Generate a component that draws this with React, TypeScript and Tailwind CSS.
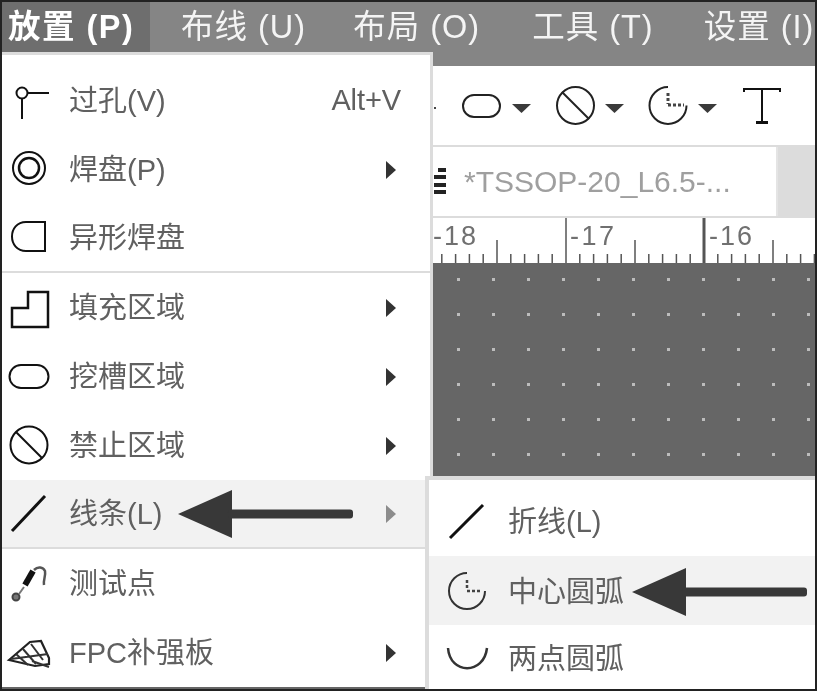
import React from "react";

const FONT = { fontFamily: '"Liberation Sans","Noto Sans CJK SC",sans-serif' };

function Caret({ light }: { light?: boolean }) {
  return (
    <svg width="10" height="18" viewBox="0 0 10 18" className="shrink-0">
      <path d="M0 0 L10 9 L0 18 Z" fill={light ? "#8c8c8c" : "#333"} />
    </svg>
  );
}

function DropCaret() {
  return (
    <svg width="19" height="9" viewBox="0 0 19 9" className="mt-[6px] shrink-0">
      <path d="M0 0 H19 L9.5 9 Z" fill="#3a3a3a" />
    </svg>
  );
}

function RowIcon({ w = 67, h = 69, children }: { w?: number; h?: number; children: React.ReactNode }) {
  return (
    <svg width={w} height={h} viewBox={`0 0 ${w} ${h}`} fill="none" stroke="#111" strokeWidth="2" className="shrink-0">
      {children}
    </svg>
  );
}

function MenuRow({
  icon,
  label,
  shortcut,
  arrow,
  active,
  separator,
}: {
  icon: React.ReactNode;
  label: string;
  shortcut?: string;
  arrow?: boolean;
  active?: boolean;
  separator?: boolean;
}) {
  return (
    <div
      className={`flex h-[69px] items-center pr-[34px] ${active ? "bg-[#f2f2f2]" : ""} ${
        separator ? "border-b-2 border-[#dcdcdc]" : ""
      }`}
    >
      <RowIcon>{icon}</RowIcon>
      <span className="mt-[3px] flex-1 whitespace-nowrap text-[29px] text-[#606060]">{label}</span>
      {shortcut && <span className="mr-[-5px] text-[29px] tracking-[-0.1px] text-[#606060]">{shortcut}</span>}
      {arrow && <Caret light={active} />}
    </div>
  );
}

function SubRow({
  icon,
  label,
  active,
  h,
  textClass,
}: {
  icon: React.ReactNode;
  label: string;
  active?: boolean;
  h: number;
  textClass: string;
}) {
  return (
    <div className={`flex items-center ${active ? "bg-[#f2f2f2]" : ""}`} style={{ height: h }}>
      <RowIcon w={79} h={h}>{icon}</RowIcon>
      <span className={`whitespace-nowrap text-[29px] text-[#606060] ${textClass}`}>{label}</span>
    </div>
  );
}

function Arrow({ className }: { className: string }) {
  return (
    <svg width="176" height="48" viewBox="0 0 176 48" className={`absolute ${className}`}>
      <path d="M0 24 L54 0 V48 Z" fill="#383838" />
      <rect x="50" y="19.5" width="125" height="9" rx="3" fill="#383838" />
    </svg>
  );
}

function Ruler() {
  const ticks: React.ReactNode[] = [];
  for (let i = 0; i < 28; i++) {
    const x = 13.8 * i + 7.8;
    const m = i % 10;
    const major = m === 9;
    const mid = m === 4;
    ticks.push(
      <line
        key={i}
        x1={x}
        x2={x}
        y1={major ? 0 : mid ? 22 : 36}
        y2={45}
        stroke="#555"
        strokeWidth={major ? (i > 15 ? 3 : 1.5) : 1.5}
      />
    );
  }
  return (
    <svg width="385" height="45" viewBox="0 0 385 45" className="absolute left-[432px] top-0">
      {ticks}
    </svg>
  );
}

const menuItems = ["布线 (U)", "布局 (O)", "工具 (T)", "设置 (I)"];
const menuX = ["ml-[31px]", "ml-[47px]", "ml-[52px]", "ml-[50px]"];

export default function App() {
  return (
    <div className="h-[693px] w-[819px] overflow-hidden bg-white blur-[0.5px]" style={FONT}>
      <div className="relative flex h-[691px] w-[817px] flex-col overflow-hidden border-2 border-[#222]">
        {/* menu bar */}
        <div className="flex h-[64px] shrink-0 items-start bg-[#858585] text-[32.5px] leading-[50px] tracking-[1px] text-[#f4f4f4]">
          <div className="flex h-[50px] w-[148px] items-center bg-[#6e6e6e] pl-[6px] font-bold tracking-[1.5px] text-white">放置 (P)</div>
          {menuItems.map((t, i) => (
            <span key={t} className={`${menuX[i]} whitespace-nowrap`}>
              {t}
            </span>
          ))}
        </div>

        {/* toolbar */}
        <div className="flex h-[79px] shrink-0 items-center bg-white pl-[432px]">
          <div className="mr-[26px] mt-[4px] h-[2px] w-[2px] shrink-0 bg-[#444]" />
          <svg width="40" height="26" viewBox="0 0 40 26" fill="none" stroke="#222" strokeWidth="2" className="mr-[10px] shrink-0">
            <rect x="1" y="2" width="37" height="22" rx="11" />
          </svg>
          <DropCaret />
          <svg width="41" height="41" viewBox="0 0 41 41" fill="none" stroke="#222" strokeWidth="2" className="ml-[24px] mr-[9px] shrink-0">
            <circle cx="20.5" cy="20.5" r="18.5" />
            <path d="M7 7 L34 34" />
          </svg>
          <DropCaret />
          <svg width="41" height="41" viewBox="0 0 41 41" fill="none" stroke="#222" strokeWidth="2" className="ml-[24px] mr-[9px] shrink-0">
            <path d="M20 2 A18.5 18.5 0 1 0 38.5 20.5" />
            <path d="M20 8 V19 M20 20 H36" strokeDasharray="3 2" strokeWidth="3" stroke="#444" />
          </svg>
          <DropCaret />
          <svg width="38" height="38" viewBox="0 0 38 38" fill="none" stroke="#111" strokeWidth="2" className="ml-[26px] shrink-0">
            <path d="M1 5 V2 H37 V5 M19 2 V36" />
            <path d="M13 35.5 H25" strokeWidth="3" />
          </svg>
        </div>

        {/* tab bar */}
        <div className="flex h-[73px] shrink-0 border-y-2 border-[#dcdcdc] bg-white">
          <div className="flex w-[774px] items-center pl-[430px]">
            <svg width="14" height="34" viewBox="0 0 14 34" className="mr-[18px] shrink-0" fill="#222">
              <rect x="6" y="3" width="8" height="4" />
              <rect x="2" y="10" width="12" height="4" />
              <rect x="2" y="18" width="12" height="4" />
              <rect x="2" y="25" width="12" height="4" />
            </svg>
            <span className="whitespace-nowrap text-[30px] text-[#9f9f9f]">*TSSOP-20_L6.5-...</span>
          </div>
          <div className="flex-1 border-l-2 border-[#e4e4e4] bg-[#dcdcdc]" />
        </div>

        {/* ruler */}
        <div className="relative h-[45px] shrink-0 bg-white">
          <Ruler />
          <span className="absolute left-[431px] top-[-2px] text-[27px] tracking-[2px] text-[#707070]">-18</span>
          <span className="absolute left-[568px] top-[-2px] text-[27px] tracking-[2.5px] text-[#707070]">-17</span>
          <span className="absolute left-[707px] top-[-2px] text-[27px] tracking-[2px] text-[#707070]">-16</span>
        </div>

        {/* canvas */}
        <div className="min-h-0 flex-1 bg-[#666]">
          <svg width="815" height="230" className="block">
            <defs>
              <pattern id="grid" x="0" y="15" width="35" height="35" patternUnits="userSpaceOnUse">
                <rect x="0" y="0" width="3" height="3" fill="#bdbdbd" />
              </pattern>
            </defs>
            <rect width="815" height="230" fill="url(#grid)" />
          </svg>
        </div>

        {/* place menu */}
        <div className="absolute left-0 top-[50px] w-[431px] border-r-[3px] border-t-[3px] border-[#dcdcdc] bg-white pt-[11px]">
          <MenuRow
            label="过孔(V)"
            shortcut="Alt+V"
            icon={
              <>
                <circle cx="20" cy="27" r="5.5" />
                <path d="M20 33 V53 M26 27 H47" />
              </>
            }
          />
          <MenuRow
            label="焊盘(P)"
            arrow
            icon={
              <>
                <circle cx="27" cy="33" r="16" />
                <circle cx="27" cy="33" r="10" strokeWidth="2.5" />
              </>
            }
          />
          <MenuRow
            label="异形焊盘"
            separator
            icon={<path d="M43 19 H24 C15 19 10 26 10 33.5 C10 41 15 48 24 48 H43 Z" />}
          />
          <MenuRow label="填充区域" arrow icon={<path d="M10 54 V35 H26 V19 H46 V54 Z" strokeWidth="2.5" />} />
          <MenuRow label="挖槽区域" arrow icon={<rect x="7.5" y="23" width="39" height="23" rx="11.5" />} />
          <MenuRow
            label="禁止区域"
            arrow
            icon={
              <>
                <circle cx="27" cy="34" r="18.5" />
                <path d="M14 21 L40 47" />
              </>
            }
          />
          <MenuRow label="线条(L)" arrow active separator icon={<path d="M10 52 L43 17" strokeWidth="3" />} />
          <MenuRow
            label="测试点"
            icon={
              <>
                <circle cx="14" cy="48" r="3.5" fill="#777" stroke="#444" />
                <path d="M17 45 L22 38" stroke="#777" />
                <path d="M23 36 L31 22" strokeWidth="6" />
                <path d="M32 21 C36 17 41 18 43 22 C44 27 41 31 42 36" stroke="#555" strokeWidth="2.5" />
              </>
            }
          />
          <MenuRow
            label="FPC补强板"
            arrow
            icon={
              <>
                <path d="M7 42 L28 24 L39 23 L47 40 L47 46 L33 48 Z" strokeWidth="2.2" stroke="#222" />
                <path d="M14 36 L26 47 M21 31 L34 46 M29 26 L41 42 M9 41 L46 36 M30 43 L47 49" strokeWidth="2" stroke="#333" />
              </>
            }
          />
        </div>

        {/* line submenu */}
        <div className="absolute left-[423px] top-[474px] h-[216px] w-[394px] border-l-[4px] border-t-[4px] border-[#dcdcdc] bg-white">
          <SubRow
            h={76}
            textClass="mt-[10px]"
            label="折线(L)"
            icon={<path d="M21 58 L54 25" strokeWidth="3" />}
          />
          <SubRow
            h={69}
            active
            textClass="mt-[4px]"
            label="中心圆弧"
            icon={
              <>
                <path d="M38 17 A18 18 0 1 0 56 35" stroke="#333" />
                <path d="M38 24 V34 M38 35 H53" strokeDasharray="3 2" strokeWidth="2.5" stroke="#444" />
              </>
            }
          />
          <SubRow
            h={67}
            textClass="mt-[2px]"
            label="两点圆弧"
            icon={<path d="M19 23 C21 50 55 50 58 23" stroke="#333" strokeWidth="2.5" />}
          />
        </div>

        <Arrow className="left-[176px] top-[488px]" />
        <Arrow className="left-[630px] top-[566px]" />
      </div>
    </div>
  );
}
